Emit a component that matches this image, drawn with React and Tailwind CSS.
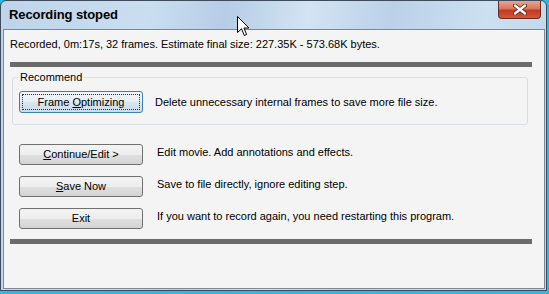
const font = { fontFamily: '"Liberation Sans", Arial, sans-serif' };

function Btn({ children, focused }) {
  return (
    <button
      className={
        focused
          ? "w-[124px] h-[22px] rounded-[3px] border border-[#3c7fb1] bg-[linear-gradient(#f1f5f9_0%,#e6eef5_50%,#d8e5ef_51%,#cddde9_100%)] p-[2px] text-[11px] text-black"
          : "w-[124px] h-[21px] rounded-[3px] border border-[#707070] bg-[linear-gradient(#f4f4f4_0%,#ededed_50%,#e0e0e0_51%,#d4d4d4_100%)] text-[11px] text-black"
      }
    >
      {focused ? (
        <div className="w-full h-full border border-dotted border-[#333] flex items-center justify-center leading-none">
          {children}
        </div>
      ) : (
        <div className="flex items-center justify-center leading-none">{children}</div>
      )}
    </button>
  );
}

function Row({ label, text }) {
  return (
    <div className="flex items-center h-[21px]">
      <div className="ml-[15px]">
        <Btn>{label}</Btn>
      </div>
      <span className="ml-[14px] text-[11px]">{text}</span>
    </div>
  );
}

function Cursor() {
  return (
    <svg className="absolute left-[236px] top-[15px]" width="13" height="21" viewBox="0 0 13 21">
      <path
        d="M0.5 0.5 L0.5 16.5 L4.5 12.8 L7.3 19.5 L9.6 18.5 L6.9 12 L12 12 Z"
        fill="#fff"
        stroke="#000"
        strokeWidth="1"
        strokeLinejoin="round"
      />
    </svg>
  );
}

export default function App() {
  return (
    <div className="w-[549px] h-[294px] bg-[#2fb8e0] overflow-hidden" style={font}>
      <div className="relative w-[547px] h-[291px] rounded-tl-[6px] rounded-tr-[6px] border border-[#3d4b5c] bg-[linear-gradient(100deg,#bdd4ea_0%,#cadef0_25%,#b6cde5_38%,#d3e3f2_52%,#bad1e8_66%,#cde0f1_82%,#bcd3ea_100%)] flex flex-col">
        {/* title bar */}
        <div className="h-[28px] flex items-center pl-[8px]">
          <span className="text-[13px] font-bold text-black tracking-[-0.1px]">Recording stoped</span>
        </div>
        {/* close button */}
        <div className="absolute top-0 right-[5px] w-[43px] h-[18px] rounded-b-[4px] border border-t-0 border-[#6e2a22] bg-[linear-gradient(#eaa58f_0%,#d9765d_45%,#c23a1f_55%,#d4583a_100%)] flex items-center justify-center">
          <svg width="14" height="11" viewBox="0 0 14 11">
            <path d="M2 1.5 L12 9.5 M12 1.5 L2 9.5" stroke="#5a2018" strokeWidth="4" strokeLinecap="round" />
            <path d="M2 1.5 L12 9.5 M12 1.5 L2 9.5" stroke="#fff" strokeWidth="2.4" strokeLinecap="round" />
          </svg>
        </div>
        <Cursor />
        {/* client */}
        <div className="flex-1 ml-[2px] mr-[1px] mb-[1px] border border-[#7a8899] bg-[#f4f4f4] text-black flex flex-col">
          <div className="pl-[6px] pt-[7px] text-[11px] leading-[14px]">
            Recorded, 0m:17s, 32 frames. Estimate final size: 227.35K - 573.68K bytes.
          </div>
          <div className="ml-[6px] mt-[11px] w-[522px] h-[5px] bg-[#6b6b6b]" />
          <fieldset className="ml-[8px] mt-[3px] w-[516px] h-[55px] border border-[#d5dfe5] rounded-[3px] px-[6px]">
            <legend className="px-[2px] text-[11px] leading-[14px] ml-[-1px]">Recommend</legend>
            <div className="flex items-center mt-[7px]">
              <Btn focused>
                <span>
                  Frame <u>O</u>ptimizing
                </span>
              </Btn>
              <span className="ml-[12px] text-[11px]">
                Delete unnecessary internal frames to save more file size.
              </span>
            </div>
          </fieldset>
          <div className="mt-[17px] flex flex-col gap-[11px]">
            <Row
              label={
                <span>
                  <u>C</u>ontinue/Edit &gt;
                </span>
              }
              text="Edit movie. Add annotations and effects."
            />
            <Row
              label={
                <span>
                  <u>S</u>ave Now
                </span>
              }
              text="Save to file directly, ignore editing step."
            />
            <Row label="Exit" text="If you want to record again, you need restarting this program." />
          </div>
          <div className="ml-[6px] mt-[12px] w-[522px] h-[5px] bg-[#6b6b6b]" />
        </div>
      </div>
    </div>
  );
}
